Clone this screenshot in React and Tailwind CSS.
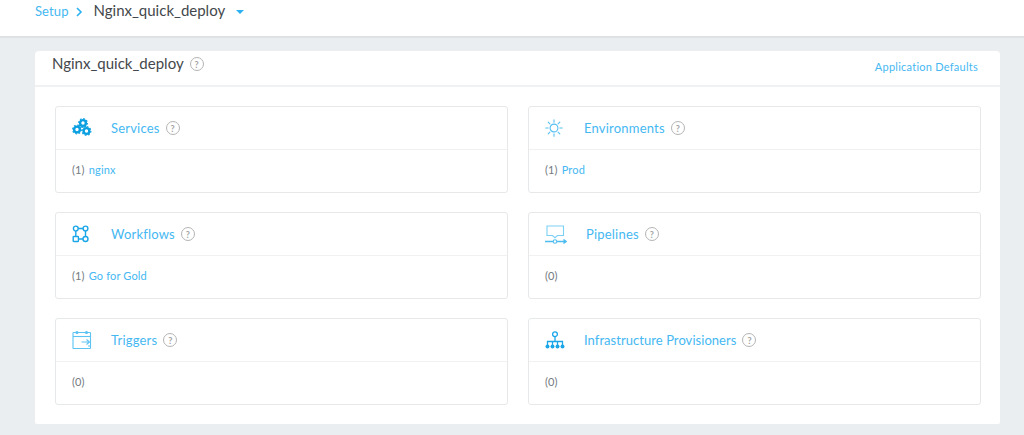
import React from "react";

const Help = () => (
  <span className="inline-flex items-center justify-center w-[14px] h-[14px] rounded-full border-[1.5px] border-[#b4b4b4] text-[#a3a3a3] text-[9px] font-bold leading-none shrink-0">?</span>
);

const Gears = () => (
  <svg width="20" height="20" viewBox="0 0 20 20" fill="none">
    {[[11,5],[5,11.5],[14.5,13]].map(([x,y],i)=>(
      <g key={i}>
        <circle cx={x} cy={y} r="2.9" stroke="#0a9fe0" strokeWidth="2.4"/>
        <circle cx={x} cy={y} r="4.4" stroke="#0a9fe0" strokeWidth="1.1" strokeDasharray="1.7 1.7"/>
      </g>
    ))}
  </svg>
);

const Flows = () => (
  <svg width="18" height="18" viewBox="0 0 18 18" fill="none" stroke="#1ba6e8" strokeWidth="1.4">
    <circle cx="3.8" cy="3.5" r="2.4"/>
    <circle cx="13.5" cy="3.5" r="2.4"/>
    <rect x="1.2" y="11.5" width="5.2" height="5" rx="0.6"/>
    <circle cx="13.5" cy="14" r="2.5"/>
    <path d="M6.2 3.5h4.9M3.8 6v5.5M13.5 6v5.5M6.4 14H11"/>
  </svg>
);

const Calendar = () => (
  <svg width="20" height="20" viewBox="0 0 20 20" fill="none" stroke="#5cc3f2" strokeWidth="1.1">
    <rect x="1" y="2.5" width="17.5" height="16" rx="0.6"/>
    <path d="M1 6.5h17.5"/>
    <circle cx="5" cy="2.5" r="1" fill="#5cc3f2"/>
    <circle cx="14.5" cy="2.5" r="1" fill="#5cc3f2"/>
    <path d="M9.5 12h8M14.5 9.5l3 2.5-3 2.5M16 16h2.5"/>
  </svg>
);

const Sun = () => (
  <svg width="18" height="18" viewBox="0 0 18 18" fill="none" stroke="#57c0f2" strokeWidth="1.1" strokeLinecap="round">
    <circle cx="9" cy="9" r="3.9"/>
    <path d="M9 .8v2.4M9 14.8v2.4M.8 9h2.4M14.8 9h2.4M3.2 3.2l1.7 1.7M13.1 13.1l1.7 1.7M14.8 3.2l-1.7 1.7M4.9 13.1l-1.7 1.7"/>
  </svg>
);

const Pipe = () => (
  <svg width="22" height="19" viewBox="0 0 22 19" fill="none" stroke="#4fbcf0" strokeWidth="1.1">
    <path d="M2 1h16.5v9.5h-6l-2.5 2.2-2.5-2.2H2z" stroke="#7ccff5"/>
    <path d="M0 16.5h8M12 16.5h7" strokeWidth="1.4"/>
    <circle cx="10" cy="16.5" r="1.8"/>
    <path d="M19 14.8l2.5 1.7-2.5 1.7z" fill="#4fbcf0"/>
  </svg>
);

const Tree = () => (
  <svg width="20" height="18" viewBox="0 0 20 18" fill="none" stroke="#1ba6e8" strokeWidth="1.3">
    <circle cx="10" cy="3.2" r="2.4"/>
    <path d="M10 5.6v5M2.5 14v-3.5h15V14M7.5 10.5V14M12.5 10.5V14"/>
    {[2.5,7.5,12.5,17.5].map(x=><circle key={x} cx={x} cy="15.5" r="2" fill="#1ba6e8" stroke="none"/>)}
  </svg>
);

const Card = ({ icon, title, count, link, gap, track = "tracking-[0.2px]" }) => (
  <div className="h-[87px] rounded-[3px] border border-[#e6e8ea] bg-white flex flex-col">
    <div className="h-[43px] shrink-0 flex items-center border-b border-[#f0f1f3] pl-4">
      <span className={`flex items-center ${gap}`}>{icon}</span>
      <span className={`text-[13px] pt-[1px] text-[#45b8f2] ${track}`}>{title}</span>
      <span className="ml-[6px] flex"><Help /></span>
    </div>
    <div className="flex-1 flex items-center pl-4 pb-[2px] text-[11px] tracking-[0.15px]">
      <span className="text-[#737a81]">{count}</span>
      {link && <span className="ml-[4px] text-[#45b8f2]">{link}</span>}
    </div>
  </div>
);

export default function App() {
  return (
    <div className="w-[1024px] h-[435px] overflow-hidden bg-[#ebeef1] font-['Lato','Noto_Sans',sans-serif]">
      <div className="h-[38px] bg-white border-b-2 border-[#dfe2e5] flex items-start pl-[35px] pt-[1px]">
        <span className="text-[13px] leading-[18px] mt-[1px] tracking-[0.1px] text-[#45b8f2]">Setup</span>
        <svg className="ml-[7px] mt-[6px]" width="7" height="10" viewBox="0 0 7 10" fill="none" stroke="#2bb1f2" strokeWidth="1.6"><path d="M1 1l4 4-4 4"/></svg>
        <span className="ml-[11px] text-[15px] leading-[18px] text-[#44484c]">Nginx_quick_deploy</span>
        <span className="ml-[11px] mt-[9px] w-0 h-0 border-x-[4px] border-x-transparent border-t-[4px] border-t-[#2bb1f2]"></span>
      </div>
      <div className="pt-[13px] px-[35px] w-[1000px] box-content">
        <div className="w-[965px] h-[373px] bg-white rounded-t-[4px] rounded-b-[2px]">
          <div className="h-[36px] border-b-2 border-[#eff1f3] flex items-start pl-[17px] pr-[22px]">
            <span className="text-[15px] leading-[18px] mt-[3px] text-[#44484c]">Nginx_quick_deploy</span>
            <span className="ml-[6px] mt-[6px] flex"><Help /></span>
            <span className="ml-auto mt-[8px] text-[11px] leading-[15px] tracking-[0.25px] text-[#45b8f2]">Application Defaults</span>
          </div>
          <div className="grid grid-cols-2 gap-x-[20px] gap-y-[19px] pt-[19px] pl-[20px] pr-[19px]">
            <Card icon={<Gears />} gap="mr-[19px]" title="Services" count="(1)" link="nginx" />
            <Card icon={<Sun />} gap="mr-[21px]" title="Environments" count="(1)" link="Prod" />
            <Card icon={<Flows />} gap="mr-[21px]" title="Workflows" count="(1)" link="Go for Gold" />
            <Card icon={<Pipe />} gap="mr-[19px]" title="Pipelines" count="(0)" />
            <Card icon={<Calendar />} gap="mr-[19px]" title="Triggers" count="(0)" />
            <Card icon={<Tree />} gap="mr-[19px]" title="Infrastructure Provisioners" count="(0)" track="tracking-[0.05px]" />
          </div>
        </div>
      </div>
    </div>
  );
}
